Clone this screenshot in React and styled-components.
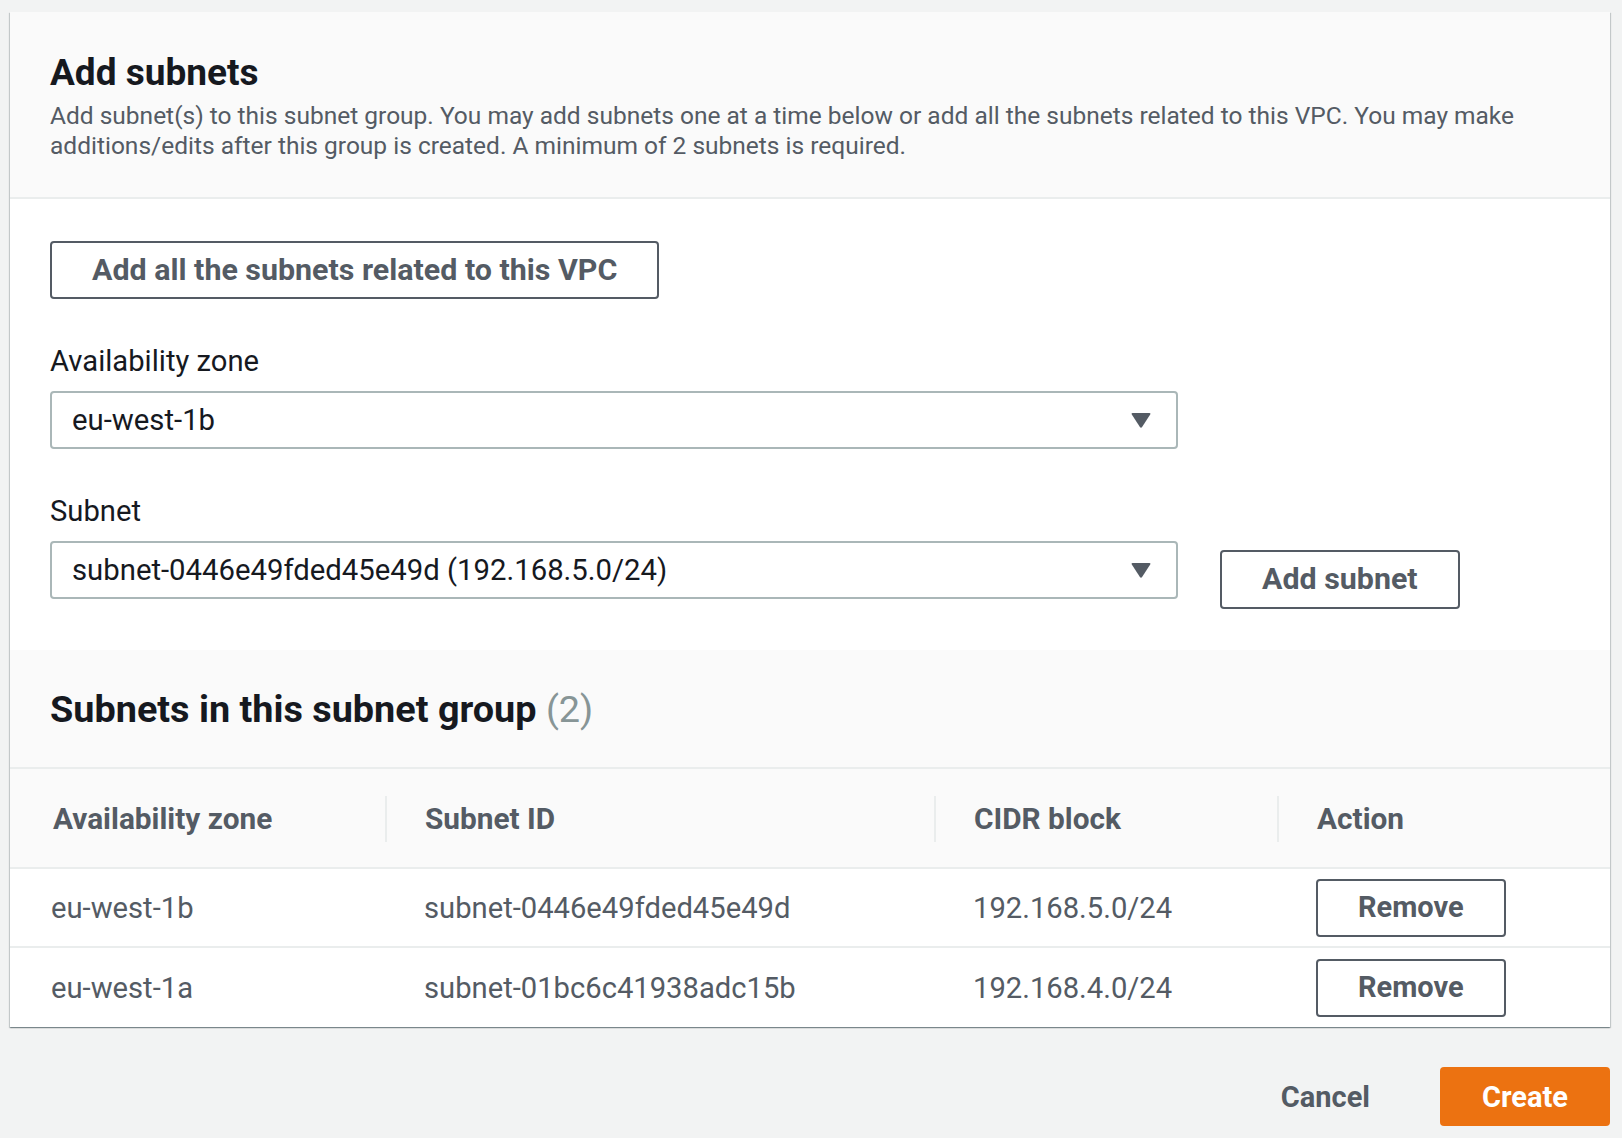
import React from "react";
import styled, { createGlobalStyle } from "styled-components";

const GlobalStyle = createGlobalStyle`
  html, body { margin: 0; padding: 0; background: #f2f3f3; }
  body {
    font-family: Roboto, "Liberation Sans", Arial, sans-serif;
    color: #16191f;
    -webkit-font-smoothing: antialiased;
  }
  * { box-sizing: border-box; }
`;

const Page = styled.div`
  padding: 12px 12px 10px 10px;
`;

const Card = styled.div`
  background: #fff;
  box-shadow: 0 1px 1px 0 rgba(0, 28, 36, 0.3), 1px 1px 1px 0 rgba(0, 28, 36, 0.15),
    -1px 1px 1px 0 rgba(0, 28, 36, 0.15);
`;

const Header = styled.div`
  background: #fafafa;
  border-bottom: 2px solid #eaeded;
  padding: ${(p) => p.$pad};
`;

const Title = styled.h2`
  margin: 0;
  font-size: ${(p) => p.$size || "37px"};
  line-height: 42px;
  font-weight: 700;
  color: #16191f;
`;

const Count = styled.span`
  font-weight: 400;
  color: #879596;
`;

const Description = styled.p`
  margin: 7px 0 0;
  font-size: 24.5px;
  line-height: 30px;
  color: #545b64;
`;

const Body = styled.div`
  padding: 42px 40px 41px;
`;

const Button = styled.button`
  height: 58px;
  padding: 0 40px;
  border: 2px solid #545b64;
  border-radius: 4px;
  background: #fff;
  color: #545b64;
  font-family: inherit;
  font-size: ${(p) => p.$size || "30.4px"};
  font-weight: 700;
  line-height: 1;
  cursor: pointer;
  flex: none;
`;

const Field = styled.div`
  margin-top: 47px;
`;

const Label = styled.div`
  font-size: 29.2px;
  line-height: 30px;
  color: #16191f;
  margin-bottom: 15px;
`;

const FieldRow = styled.div`
  display: flex;
  align-items: flex-start;
  gap: 42px;
`;

const Select = styled.div`
  width: 1128px;
  height: 58px;
  border: 2px solid #aab7b8;
  border-radius: 4px;
  background: #fff;
  display: flex;
  align-items: center;
  justify-content: space-between;
  padding: 0 25px 0 20px;
  font-size: 29.3px;
  color: #16191f;
`;

const SideButton = styled(Button)`
  margin-top: 9px;
  height: 59px;
`;

const Table = styled.div`
  display: grid;
  grid-template-columns: 375px 549px 343px 1fr;
`;

const HeadCell = styled.div`
  position: relative;
  height: 100px;
  background: #fafafa;
  border-bottom: 2px solid #eaeded;
  display: flex;
  align-items: center;
  padding-left: ${(p) => (p.$first ? "43px" : "40px")};
  font-size: 29.8px;
  font-weight: 700;
  color: #545b64;
  &::before {
    content: "";
    display: ${(p) => (p.$first ? "none" : "block")};
    position: absolute;
    left: 0;
    top: 27px;
    width: 2px;
    height: 46px;
    background: #eaeded;
  }
`;

const Cell = styled.div`
  height: 79px;
  border-bottom: ${(p) => (p.$last ? "none" : "2px solid #eaeded")};
  display: flex;
  align-items: center;
  padding-left: ${(p) => (p.$first ? "41px" : "39px")};
  font-size: 29.2px;
  color: #545b64;
`;

const Footer = styled.div`
  margin-top: 40px;
  display: flex;
  justify-content: flex-end;
  align-items: center;
`;

const LinkButton = styled.button`
  height: 59px;
  padding: 0 20px;
  margin-right: 50px;
  border: none;
  background: transparent;
  color: #545b64;
  font-family: inherit;
  font-size: 29px;
  font-weight: 700;
  cursor: pointer;
`;

const PrimaryButton = styled.button`
  height: 59px;
  padding: 0 42px;
  border: none;
  border-radius: 4px;
  background: #ec7211;
  color: #fff;
  font-family: inherit;
  font-size: 29px;
  font-weight: 700;
  cursor: pointer;
`;

const Caret = () => (
  <svg width="20" height="15" viewBox="0 0 20 15">
    <path
      d="M1.6 0 H18.4 Q20 0 19.2 1.4 L11.1 13.9 Q10 15.4 8.9 13.9 L0.8 1.4 Q0 0 1.6 0 Z"
      fill="#545b64"
    />
  </svg>
);

const rows = [
  { az: "eu-west-1b", id: "subnet-0446e49fded45e49d", cidr: "192.168.5.0/24" },
  { az: "eu-west-1a", id: "subnet-01bc6c41938adc15b", cidr: "192.168.4.0/24" },
];

export default function App() {
  return (
    <>
      <GlobalStyle />
      <Page>
        <Card>
          <Header $pad="40px 40px 36px">
            <Title>Add subnets</Title>
            <Description>
              Add subnet(s) to this subnet group. You may add subnets one at a time below or add all
              the subnets related to this VPC. You may make additions/edits after this group is
              created. A minimum of 2 subnets is required.
            </Description>
          </Header>
          <Body>
            <Button>Add all the subnets related to this VPC</Button>
            <Field>
              <Label>Availability zone</Label>
              <Select>
                <span>eu-west-1b</span>
                <Caret />
              </Select>
            </Field>
            <Field>
              <Label>Subnet</Label>
              <FieldRow>
                <Select>
                  <span>subnet-0446e49fded45e49d (192.168.5.0/24)</span>
                  <Caret />
                </Select>
                <SideButton>Add subnet</SideButton>
              </FieldRow>
            </Field>
          </Body>
          <Header $pad="38px 40px 37px">
            <Title $size="37.8px">
              Subnets in this subnet group <Count>(2)</Count>
            </Title>
          </Header>
          <Table>
            <HeadCell $first>Availability zone</HeadCell>
            <HeadCell>Subnet ID</HeadCell>
            <HeadCell>CIDR block</HeadCell>
            <HeadCell>Action</HeadCell>
            {rows.map((r, i) => {
              const last = i === rows.length - 1;
              return (
                <React.Fragment key={r.id}>
                  <Cell $first $last={last}>{r.az}</Cell>
                  <Cell $last={last}>{r.id}</Cell>
                  <Cell $last={last}>{r.cidr}</Cell>
                  <Cell $last={last}>
                    <Button $size="29px">Remove</Button>
                  </Cell>
                </React.Fragment>
              );
            })}
          </Table>
        </Card>
        <Footer>
          <LinkButton>Cancel</LinkButton>
          <PrimaryButton>Create</PrimaryButton>
        </Footer>
      </Page>
    </>
  );
}
